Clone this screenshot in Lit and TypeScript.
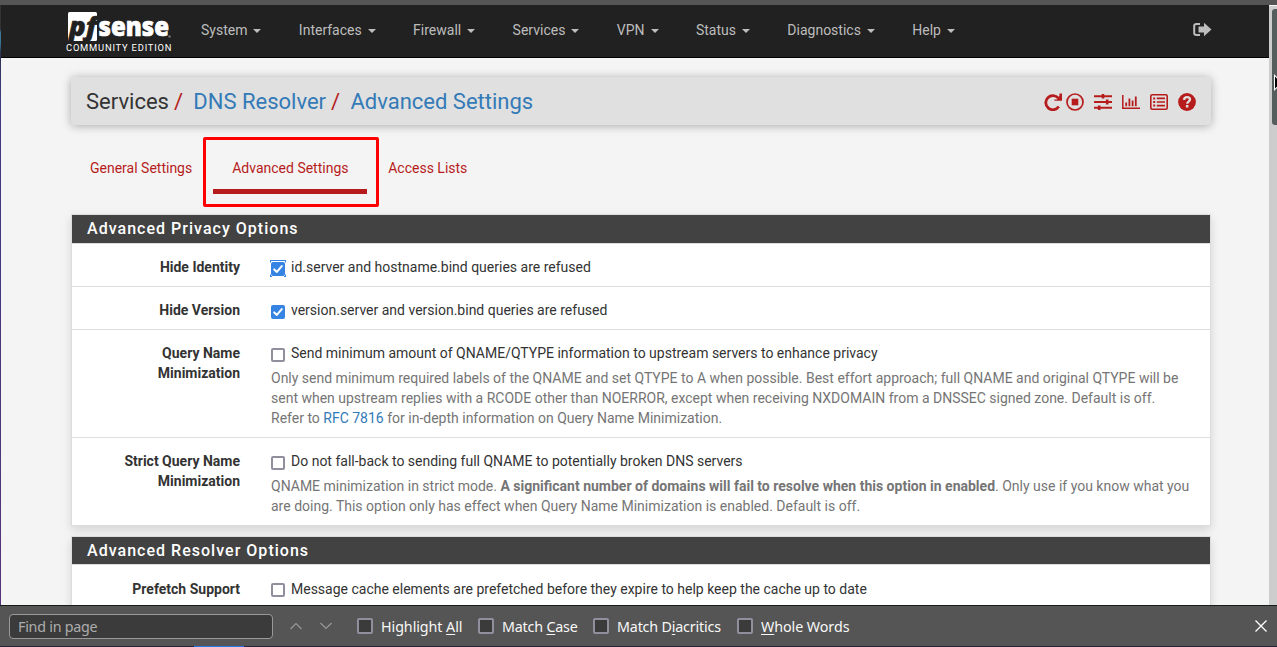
import { LitElement, html, css, svg, TemplateResult } from "lit";
import { customElement, property } from "lit/decorators.js";

@customElement("check-box")
class CheckBox extends LitElement {
  @property({ type: Boolean }) checked = false;
  @property({ type: Boolean }) ring = false;
  static styles = css`
    :host { display: block; flex: none; width: 14px; height: 14px; margin-top: 5px; }
    .box { box-sizing: border-box; width: 14px; height: 14px; border: 2px solid #8f8f9d; border-radius: 2px; background: #fff; position: relative; }
    .on { border: 0; background: #3584e4; }
    .ring { position: absolute; left: -1px; top: -2px; }
    svg { display: block; }
  `;
  render() {
    return html`<div class="box ${this.checked ? "on" : ""}">
      ${this.checked
        ? html`<svg width="14" height="14" viewBox="0 0 14 14"><path d="M3.2 7.4 L5.9 9.9 L10.8 4.1" fill="none" stroke="#fff" stroke-width="2" stroke-linecap="round" stroke-linejoin="round"/></svg>`
        : ""}
      ${this.ring
        ? html`<svg class="ring" width="16" height="17" viewBox="0 0 16 17"><path d="M0 .5H16M.5 0V2.5M15.5 0V2.5M.5 14.5V17M15.5 14.5V17M0 16.5H2M14 16.5H16" fill="none" stroke="#3584e4"/></svg>`
        : ""}
    </div>`;
  }
}

@customElement("option-row")
class OptionRow extends LitElement {
  @property() label = "";
  @property() text = "";
  @property({ type: Boolean }) checked = false;
  @property({ type: Boolean }) ring = false;
  @property({ type: Boolean }) help = false;
  static styles = css`
    :host { display: flex; padding: 13px 15px 9px 0; border-bottom: 1px solid #ddd; line-height: 20px; }
    :host(:last-child) { border-bottom: 0; }
    :host([loose]) { padding-top: 14px; }
    :host([loose]) check-box { margin-top: 4px; }
    .label { width: 168px; flex: none; margin-right: 31px; text-align: right; font-weight: 700; display: flex; justify-content: flex-end; }
    .label span { max-width: 130px; }
    .body { flex: 1; min-width: 0; }
    .line { display: flex; gap: 6px; white-space: nowrap; }
    .help { display: block; margin-top: 5px; color: #757575; white-space: nowrap; }
    .help:not(.filled) { display: none; }
  `;
  render() {
    return html`<div class="label"><span>${this.label}</span></div>
      <div class="body">
        <div class="line"><check-box ?checked=${this.checked} ?ring=${this.ring}></check-box><span>${this.text}</span></div>
        <div class="help ${this.help ? "filled" : ""}"><slot></slot></div>
      </div>`;
  }
}

const icons: TemplateResult[] = [
  svg`<path d="M14.4 5.2 A7.1 7.1 0 1 0 14.8 13.6" fill="none" stroke="currentColor" stroke-width="2.8"/><path d="M18 .4 V7.8 H10.4 V6.4 H13 L15.4 3 V.4 Z" fill="currentColor"/>`,
  svg`<circle cx="9" cy="9" r="8" fill="none" stroke="currentColor" stroke-width="1.7"/><rect x="5.7" y="5.7" width="6.6" height="6.6" fill="currentColor"/>`,
  svg`<path d="M0 3.2H18M0 9H18M0 14.8H18" stroke="currentColor" stroke-width="2"/><path d="M9 1V5.6M13.2 6.6V11.4M5.2 12.4V17" stroke="currentColor" stroke-width="2.6"/>`,
  svg`<path d="M.8 2V15.2H18" fill="none" stroke="currentColor" stroke-width="1.5"/><path d="M4.2 9.6V13.2M7.4 5.6V13.2M10.6 7.6V13.2M13.8 3.6V13.2" stroke="currentColor" stroke-width="1.8"/>`,
  svg`<rect x=".8" y="1.8" width="16.4" height="14.4" rx="1.4" fill="none" stroke="currentColor" stroke-width="1.6"/><path d="M6.8 5.4H15M6.8 9H15M6.8 12.6H15" stroke="currentColor" stroke-width="1.6"/><path d="M3.2 5.4H5.2M3.2 9H5.2M3.2 12.6H5.2" stroke="currentColor" stroke-width="2"/>`,
  svg`<circle cx="9" cy="9" r="8.9" fill="currentColor"/><path d="M6 6.9C6.2 4.9 7.4 4.2 9 4.2C10.8 4.2 12 5.2 12 6.6C12 8.6 9.2 8.6 9.2 10.7" fill="none" stroke="#e0e0e0" stroke-width="2.3"/><rect x="7.9" y="12" width="2.5" height="2.5" fill="#e0e0e0"/>`,
];

@customElement("app-root")
class AppRoot extends LitElement {
  static styles = css`
    :host { display: flex; flex-direction: column; height: 647px; overflow: hidden; background: #f4f4f4; font: 14px/20px Roboto, sans-serif; color: #333; }
    .chrome { height: 5px; flex: none; background: #555; }
    .view { flex: 1; min-height: 0; display: flex; overflow: hidden; }
    .edge { width: 1px; flex: none; background: linear-gradient(#333 0 24px, #3a7896 28px 38px, #2b3550 48px, #3f3a80 90px, #54337c); }
    .page { width: 1268px; flex: none; }
    .scroll { flex: 1; margin-top: 1px; background: #cdcdcd; padding: 3px 0 0 3px; position: relative; }
    .thumb { height: 116px; background: #555d5d; border-radius: 3px 0 0 3px; }
    .cursor { position: absolute; left: 5px; top: 68px; display: block; }
    .nav { box-sizing: border-box; height: 53px; background: #212121; border-bottom: 1px solid #000; display: flex; padding-left: 65px; color: #bdbdbd; }
    .brand { width: 135px; padding-top: 7px; }
    .brand svg { display: block; overflow: visible; }
    .menu { display: flex; gap: 37.4px; line-height: 50px; }
    .item { display: flex; align-items: center; height: 50px; gap: 6px; }
    .caret { border: 4px solid transparent; border-top-color: currentColor; border-bottom: 0; margin-top: 2px; }
    .logout { margin: 17px 57px 0 auto; }
    .crumbs { box-sizing: border-box; width: 1140px; height: 48px; margin: 19px 0 0 70px; padding: 2px 15px 0; background: #e0e0e0; border-radius: 4px; box-shadow: 0 1px 10px rgba(0,0,0,.3); display: flex; align-items: center; font-size: 22px; }
    .crumbs a { color: #337ab7; }
    .sl { color: #b71c1c; margin: 0 10.3px 0 5px; }
    .tools { margin: 0 0 1px auto; display: flex; gap: 10px; color: #b71c1c; }
    .tools svg:first-child { margin-right: -6px; }
    .tools svg { display: block; }
    .tabs { display: flex; margin: 26px 0 0 70px; height: 43px; color: #b71c1c; white-space: nowrap; }
    .tab { box-sizing: border-box; padding: 7px 21px 0 19px; height: 43px; }
    .tab.active { border-bottom: 5px solid #b71c1c; padding: 7px 19px 0; width: 154px; margin-right: 2px; }
    .mark { position: absolute; box-sizing: border-box; left: 203px; top: 137px; width: 176px; height: 70px; border: 3px solid #f00; border-radius: 2px; }
    .panel { box-sizing: border-box; width: 1140px; margin: 20px 0 0 70px; border: 1px solid #ddd; background: #fff; box-shadow: 0 4px 9px rgba(0,0,0,.13); }
    .panel.next { margin-top: 10px; }
    .head { height: 28px; line-height: 27px; background: #424242; color: #fff; font-size: 16px; font-weight: 500; letter-spacing: 1.02px; padding-left: 15px; border-bottom: 1px solid #ddd; }
    .next .head { height: 27px; }
    a { color: #337ab7; }
    .find { box-sizing: border-box; height: 42px; flex: none; background: #555; border-top: 1px solid #141c1c; border-bottom: 1px solid #25223a; display: flex; align-items: center; padding: 0 9px; color: #f8f8f8; font: 14.3px/20px "Noto Sans", sans-serif; letter-spacing: -.07px; position: relative; }
    .input { box-sizing: border-box; width: 264px; height: 25px; margin-top: 1px; border: 1px solid #999; border-radius: 4px; background: #3b3b3b; color: #adadad; padding: 2px 8px; line-height: 20px; letter-spacing: -.25px; }
    .arrows { display: flex; gap: 18px; margin: 0 25px 0 17px; }
    .opt { display: flex; align-items: center; gap: 8px; white-space: nowrap; }
    .opt span { padding-top: 2px; }
    .opt i { box-sizing: border-box; width: 16px; height: 16px; background: #3b3b3b; border: 2px solid #8f8f9d; border-radius: 2px; }
    u { text-underline-offset: 2px; text-decoration-thickness: 1px; }
    .close { margin-left: auto; }
    .o0 { width: 121px; } .o1 { width: 115px; letter-spacing: -.2px; } .o2 { width: 144px; letter-spacing: -.18px; }
    .task { position: absolute; left: 194px; bottom: -1px; width: 50px; height: 1px; background: #2878e8; }
  `;

  render() {
    const menu = ["System", "Interfaces", "Firewall", "Services", "VPN", "Status", "Diagnostics", "Help"];
    return html`
      <div class="chrome"></div>
      <div class="view">
        <div class="edge"></div>
        <div class="page">
          <div class="nav">
            <div class="brand">
              <svg width="110" height="42" viewBox="66 12 110 42">
                <rect x="68" y="12" width="29" height="29" rx="1.5" fill="#fff"/>
                <text x="69" y="35.5" textLength="28" lengthAdjust="spacingAndGlyphs" font-family="Open Sans" font-style="italic" font-weight="800" font-size="26" fill="#212121" stroke="#212121" stroke-width=".5">pf</text>
                <text x="98.5" y="35.7" textLength="70.5" lengthAdjust="spacingAndGlyphs" font-family="Open Sans" font-weight="800" font-size="26.5" fill="#fff" stroke="#fff" stroke-width=".7">sense</text>
                <rect x="168.5" y="35.5" width="2" height="2" fill="#888"/>
                <text x="66" y="51" textLength="105.5" font-family="Roboto" font-size="9.4" fill="#fff">COMMUNITY EDITION</text>
              </svg>
            </div>
            <div class="menu">${menu.map((m) => html`<div class="item"><span>${m}</span><span class="caret"></span></div>`)}</div>
            <svg class="logout" width="19" height="16" viewBox="0 0 19 16"><path d="M7 2H3.5Q1.2 2 1.2 4.2V10.8Q1.2 13 3.5 13H7" fill="none" stroke="#bdbdbd" stroke-width="2"/><path d="M5.5 4.5H11V.8L18.5 7.5L11 14.2V10.5H5.5Z" fill="#bdbdbd"/></svg>
          </div>
          <div class="crumbs">
            <span>Services</span><span class="sl">/</span><a>DNS Resolver</a><span class="sl">/</span><a>Advanced Settings</a>
            <div class="tools">${icons.map((i) => html`<svg width="18" height="18" viewBox="0 0 18 18">${i}</svg>`)}</div>
          </div>
          <div class="tabs">
            <div class="tab">General Settings</div>
            <div class="tab active">Advanced Settings</div>
            <div class="tab">Access Lists</div>
          </div>
          <div class="panel">
            <div class="head">Advanced Privacy Options</div>
            <option-row label="Hide Identity" text="id.server and hostname.bind queries are refused" checked ring></option-row>
            <option-row label="Hide Version" text="version.server and version.bind queries are refused" checked></option-row>
            <option-row help label="Query Name Minimization" text="Send minimum amount of QNAME/QTYPE information to upstream servers to enhance privacy">Only send minimum required labels of the QNAME and set QTYPE to A when possible. Best effort approach; full QNAME and original QTYPE will be<br>sent when upstream replies with a RCODE other than NOERROR, except when receiving NXDOMAIN from a DNSSEC signed zone. Default is off.<br>Refer to <a>RFC 7816</a> for in-depth information on Query Name Minimization.</option-row>
            <option-row help label="Strict Query Name Minimization" text="Do not fall-back to sending full QNAME to potentially broken DNS servers">QNAME minimization in strict mode. <b>A significant number of domains will fail to resolve when this option in enabled</b>. Only use if you know what you<br>are doing. This option only has effect when Query Name Minimization is enabled. Default is off.</option-row>
          </div>
          <div class="panel next">
            <div class="head">Advanced Resolver Options</div>
            <option-row loose label="Prefetch Support" text="Message cache elements are prefetched before they expire to help keep the cache up to date"></option-row>
          </div>
        </div>
        <div class="scroll"><div class="thumb"></div>
          <svg class="cursor" width="3" height="18" viewBox="0 0 3 18"><path d="M0 0L3 3V14L0 17Z" fill="#fff"/><path d="M1 2.6L3 4.6V12.4L1 14.4Z" fill="#000"/></svg>
        </div>
      </div>
      <div class="find">
        <div class="input">Find in page</div>
        <div class="arrows">
          <svg width="12" height="10" viewBox="0 0 12 10"><path d="M.5 8L6 2.5L11.5 8" fill="none" stroke="#999" stroke-width="1.2"/></svg>
          <svg width="12" height="10" viewBox="0 0 12 10"><path d="M.5 2L6 7.5L11.5 2" fill="none" stroke="#999" stroke-width="1.2"/></svg>
        </div>
        <div class="opt o0"><i></i><span>Highlight <u>A</u>ll</span></div>
        <div class="opt o1"><i></i><span>Match <u>C</u>ase</span></div>
        <div class="opt o2"><i></i><span>Match D<u>i</u>acritics</span></div>
        <div class="opt"><i></i><span><u>W</u>hole Words</span></div>
        <svg class="close" width="14" height="14" viewBox="0 0 14 14"><path d="M1.5 1.5L12.5 12.5M12.5 1.5L1.5 12.5" stroke="#fff" stroke-width="1.3"/></svg>
        <div class="task"></div>
      </div>
      <div class="mark"></div>
    `;
  }
}
